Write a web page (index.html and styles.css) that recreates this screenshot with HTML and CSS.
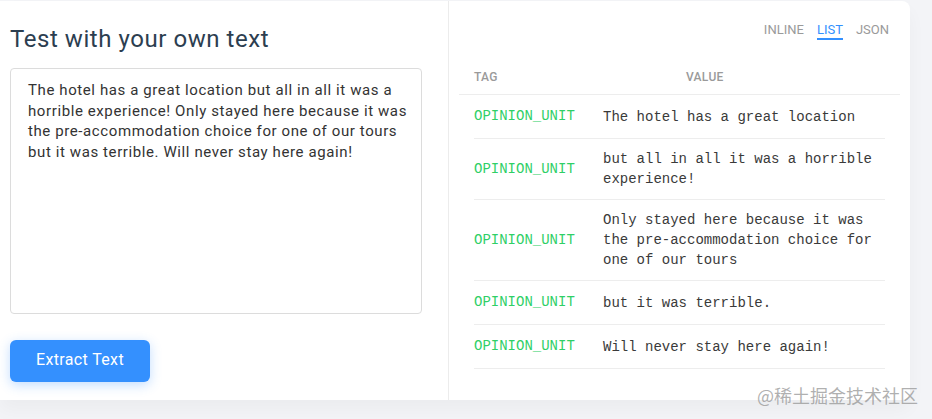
FILE: index.html
```html
<!DOCTYPE html>
<html lang="en">
<head>
<meta charset="utf-8">
<title>Test with your own text</title>
<link rel="stylesheet" href="styles.css">
</head>
<body>
<div class="card">
  <section class="left">
    <h2 class="title">Test with your own text</h2>
    <textarea class="input" spellcheck="false">The hotel has a great location but all in all it was a horrible experience! Only stayed here because it was the pre-accommodation choice for one of our tours but it was terrible. Will never stay here again!</textarea>
    <button class="btn" type="button">Extract Text</button>
  </section>
  <section class="right">
    <nav class="tabs">
      <span class="tab">INLINE</span>
      <span class="tab active">LIST</span>
      <span class="tab">JSON</span>
    </nav>
    <div class="thead">
      <span>TAG</span>
      <span>VALUE</span>
    </div>
    <div class="rows">
      <div class="row"><span class="tag">OPINION_UNIT</span><span class="val">The hotel has a great location</span></div>
      <div class="row"><span class="tag">OPINION_UNIT</span><span class="val">but all in all it was a horrible experience!</span></div>
      <div class="row"><span class="tag">OPINION_UNIT</span><span class="val">Only stayed here because it was the pre-accommodation choice for one of our tours</span></div>
      <div class="row"><span class="tag">OPINION_UNIT</span><span class="val">but it was terrible.</span></div>
      <div class="row"><span class="tag">OPINION_UNIT</span><span class="val">Will never stay here again!</span></div>
    </div>
  </section>
</div>
<div class="watermark">@稀土掘金技术社区</div>
</body>
</html>
```
FILE: styles.css
```css
html, body {
  margin: 0;
  padding: 0;
}
body {
  background: #f3f4f7;
  font-family: Roboto, "Noto Sans", Arial, sans-serif;
  width: 932px;
  height: 419px;
  overflow: hidden;
  position: relative;
}
.card {
  margin-top: 1px;
  width: 910px;
  height: 399px;
  background: #fff;
  border-radius: 0 8px 8px 0;
  display: flex;
  box-shadow: 0 10px 18px rgba(0, 0, 0, 0.035);
}
.left {
  width: 449px;
  box-sizing: border-box;
  padding: 0 26px 0 10px;
  border-right: 1px solid #ececec;
  display: flex;
  flex-direction: column;
  align-items: flex-start;
}
.title {
  margin: 22px 0 0;
  font-size: 24px;
  line-height: 32px;
  font-weight: 400;
  letter-spacing: 0.55px;
  color: #2c3e50;
}
.input {
  margin-top: 13px;
  width: 412px;
  height: 246px;
  box-sizing: border-box;
  border: 1px solid #dcdcdc;
  border-radius: 4px;
  padding: 11px 5px 10px 17px;
  font-family: Roboto, "Noto Sans", Arial, sans-serif;
  font-size: 15px;
  line-height: 20.5px;
  letter-spacing: 0.6px;
  color: #333;
  resize: none;
  outline: none;
  overflow: hidden;
}
.btn {
  margin-top: 26px;
  width: 140px;
  height: 42px;
  border: 0;
  border-radius: 6px;
  background: #3490fe;
  color: #fff;
  font-family: Roboto, "Noto Sans", Arial, sans-serif;
  font-size: 16px;
  letter-spacing: 0.35px;
  padding: 0 0 3px;
  box-shadow: 0 3px 12px rgba(52, 144, 254, 0.3);
}
.right {
  flex: 1;
  padding: 0 10px;
  display: flex;
  flex-direction: column;
}
.tabs {
  display: flex;
  justify-content: flex-end;
  gap: 13px;
  padding: 21px 11px 0 0;
}
.tab {
  font-size: 13px;
  line-height: 16px;
  color: #9a9a9a;
  border-bottom: 2px solid transparent;
}
.tab.active {
  color: #3490fe;
  border-bottom-color: #3490fe;
}
.thead {
  margin-top: 18px;
  display: grid;
  grid-template-columns: 212px 1fr;
  padding: 12px 15px 10px;
  border-bottom: 1px solid #ededed;
  font-size: 12px;
  line-height: 14px;
  font-weight: 500;
  color: #9a9a9a;
  letter-spacing: 0.3px;
}
.rows {
  padding: 0 15px;
}
.row {
  display: grid;
  grid-template-columns: 129px 1fr;
  align-items: center;
  padding: 10px 0;
  border-bottom: 1px solid #ededed;
  font-family: "Liberation Mono", "DejaVu Sans Mono", monospace;
  font-size: 14px;
}
.tag {
  color: #2fcf66;
  line-height: 23px;
}
.val {
  color: #3a3a3a;
  line-height: 20px;
}
.watermark {
  position: absolute;
  left: 757px;
  top: 384px;
  font-family: "Noto Sans CJK SC", "Noto Sans", sans-serif;
  font-size: 18px;
  line-height: 22px;
  color: rgba(150, 150, 150, 0.75);
  white-space: nowrap;
}
```
